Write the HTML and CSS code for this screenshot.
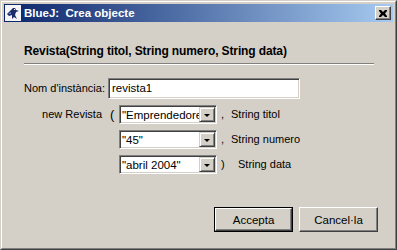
FILE: index.html
```html
<!DOCTYPE html>
<html>
<head>
<meta charset="utf-8">
<link rel="stylesheet" href="styles.css">
</head>
<body>
<div class="window">
  <div class="frame">
    <div class="titlebar">
      <svg class="app-icon" width="16" height="16" viewBox="0 0 16 16">
        <rect x="0" y="0" width="16" height="16" fill="#f4f4f8"/>
        <path d="M2 9 L6 5 L8 3 L10 3 L11 5 L14 6 L11 7 L10 10 L12 14 L9 12 L7 14 L7 10 L4 11 Z" fill="#1a2a6a"/>
        <path d="M9 4 L10 4 L10 5 L9 5 Z" fill="#ffffff"/>
        <path d="M3 9 L6 7 L6 9 Z" fill="#6a8acc"/>
      </svg>
      <span class="title">BlueJ:&nbsp; Crea objecte</span>
      <span class="close">
        <svg width="8" height="7" viewBox="0 0 8 7">
          <path d="M0 0h2l2 2 2-2h2v1l-2 2.5 2 2.5v1h-2l-2-2-2 2h-2v-1l2-2.5-2-2.5z" fill="#000"/>
        </svg>
      </span>
    </div>
    <div class="content">
      <div class="heading">Revista(String titol, String numero, String data)</div>
      <div class="sep"></div>
      <div class="form">
        <span class="lbl">Nom d'instància:</span>
        <div class="textfield">revista1</div>

        <span class="lbl">new Revista</span>
        <span class="paren">(</span>
        <div class="combo"><span class="combo-text">"Emprendedores"</span><span class="combo-btn"><span class="arrow"></span></span></div>
        <span class="punct">,</span>
        <span class="type">String titol</span>

        <div class="combo row3"><span class="combo-text">"45"</span><span class="combo-btn"><span class="arrow"></span></span></div>
        <span class="punct">,</span>
        <span class="type">String numero</span>

        <div class="combo row4"><span class="combo-text">"abril 2004"</span><span class="combo-btn"><span class="arrow"></span></span></div>
        <span class="punct">)</span>
        <span class="type type-last">String data</span>
      </div>
      <div class="buttons">
        <span class="btn btn-default"><span class="btn-inner">Accepta</span></span>
        <span class="btn"><span class="btn-inner">Cancel·la</span></span>
      </div>
    </div>
  </div>
</div>
</body>
</html>
```
FILE: styles.css
```css
html, body {
  margin: 0;
  padding: 0;
  background: #d4d0c8;
}
.window {
  width: 397px;
  height: 250px;
  box-sizing: border-box;
  border: 1px solid;
  border-color: #d4d0c8 #404040 #404040 #d4d0c8;
  background: #d4d0c8;
  font-family: "Liberation Sans", Arial, sans-serif;
  font-size: 11px;
  color: #000;
}
.frame {
  height: 100%;
  box-sizing: border-box;
  border: 1px solid;
  border-color: #ffffff #808080 #808080 #ffffff;
  padding: 2px;
  display: flex;
  flex-direction: column;
}
.titlebar {
  height: 18px;
  flex: none;
  display: flex;
  align-items: center;
  padding-left: 1px;
  padding-right: 2px;
  background: linear-gradient(to right, #0a246a, #a6caf0);
}
.app-icon {
  display: block;
  flex: none;
}
.title {
  margin-left: 3px;
  color: #fff;
  font-weight: bold;
  font-size: 11.5px;
  line-height: 14px;
  white-space: nowrap;
  flex: 1;
}
.close {
  width: 16px;
  height: 14px;
  box-sizing: border-box;
  background: #d4d0c8;
  border: 1px solid;
  border-color: #ffffff #404040 #404040 #ffffff;
  box-shadow: inset -1px -1px 0 #808080;
  display: flex;
  align-items: center;
  justify-content: center;
  padding-right: 1px;
}
.close svg {
  display: block;
}
.content {
  flex: 1;
  display: flex;
  flex-direction: column;
  padding: 22px 15px 14px 20px;
}
.heading {
  font-size: 12px;
  font-weight: bold;
  line-height: 15px;
  letter-spacing: -0.12px;
  white-space: nowrap;
}
.sep {
  margin-top: 4px;
  margin-right: 4px;
  border-top: 1px solid #808080;
  border-bottom: 1px solid #ffffff;
}
.form {
  margin-top: 13px;
  display: grid;
  grid-template-columns: 80px 15px 98px 10px auto;
  grid-template-rows: 21px 19px 19px 19px;
  row-gap: 6px;
  align-items: center;
  line-height: 13px;
}
.lbl {
  grid-column: 1;
  text-align: right;
  padding-right: 2px;
  white-space: nowrap;
}
.textfield {
  grid-column: 2 / span 4;
  justify-self: start;
  margin-left: 4px;
  width: 192px;
  height: 21px;
  box-sizing: border-box;
  background: #fff;
  border: 1px solid;
  border-color: #808080 #ffffff #ffffff #808080;
  box-shadow: inset 1px 1px 0 #404040, inset -1px -1px 0 #d4d0c8;
  padding: 3px 0 0 3px;
  font-size: 11.5px;
}
.paren {
  grid-column: 2;
  padding-left: 6px;
  font-size: 13px;
}
.combo {
  grid-column: 3;
  height: 19px;
  box-sizing: border-box;
  background: #fff;
  border: 1px solid;
  border-color: #808080 #ffffff #ffffff #808080;
  box-shadow: inset 1px 1px 0 #404040, inset -1px -1px 0 #d4d0c8;
  display: flex;
  padding: 1px;
  overflow: hidden;
}
.combo-text {
  flex: 1;
  overflow: hidden;
  white-space: nowrap;
  padding-left: 1px;
  padding-top: 2px;
  font-size: 11.5px;
}
.combo-btn {
  flex: none;
  width: 16px;
  height: 15px;
  box-sizing: border-box;
  background: #d4d0c8;
  border: 1px solid;
  border-color: #d4d0c8 #404040 #404040 #d4d0c8;
  box-shadow: inset 1px 1px 0 #ffffff, inset -1px -1px 0 #808080;
  display: flex;
  align-items: center;
  justify-content: center;
}
.arrow {
  width: 0;
  height: 0;
  border-left: 3px solid transparent;
  border-right: 3px solid transparent;
  border-top: 3px solid #000;
  margin-top: 1px;
}
.row3 { grid-row: 3; }
.row4 { grid-row: 4; }
.punct {
  grid-column: 4;
  padding-left: 4px;
}
.type {
  grid-column: 5;
  padding-left: 4px;
  white-space: nowrap;
}
.type-last {
  padding-left: 11px;
}
.buttons {
  margin-top: auto;
  display: flex;
  justify-content: flex-end;
  gap: 6px;
}
.btn {
  width: 79px;
  height: 25px;
  box-sizing: border-box;
  display: flex;
  border: 1px solid;
  border-color: #ffffff #404040 #404040 #ffffff;
  box-shadow: inset -1px -1px 0 #808080;
}
.btn-inner {
  flex: 1;
  display: flex;
  align-items: center;
  justify-content: center;
  font-size: 11.5px;
}
.btn-default {
  border-color: #000;
  box-shadow: none;
}
.btn-default .btn-inner {
  border: 1px solid;
  border-color: #ffffff #404040 #404040 #ffffff;
  box-shadow: inset -1px -1px 0 #808080;
}
```
